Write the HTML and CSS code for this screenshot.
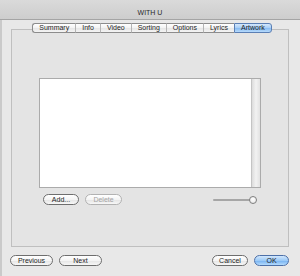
FILE: index.html
```html
<!DOCTYPE html>
<html lang="en">
  <head>
    <meta charset="UTF-8" />
    <title>WITH U</title>
    <link rel="stylesheet" href="styles.css">
  </head>
  <body>
    <div class="titlebar">WITH U</div>

    <div class="content">
      <div class="tabs">
        <div class="tab">Summary</div>
        <div class="tab">Info</div>
        <div class="tab">Video</div>
        <div class="tab">Sorting</div>
        <div class="tab">Options</div>
        <div class="tab">Lyrics</div>
        <div class="tab selected">Artwork</div>
      </div>

      <div class="group">
        <div class="artwork">
          <div class="art-view"></div>
          <div class="scroll"></div>
        </div>
        <div class="art-actions">
          <div class="btn">Add...</div>
          <div class="btn disabled">Delete</div>
          <div class="slider">
            <div class="track"></div>
            <div class="knob"></div>
          </div>
        </div>
      </div>
    </div>

    <div class="footer">
      <div class="btn btn-wide">Previous</div>
      <div class="btn btn-wide">Next</div>
      <div class="spacer"></div>
      <div class="btn">Cancel</div>
      <div class="btn default">OK</div>
    </div>
  </body>
</html>
```

FILE: styles.css
```css
body {
  margin: 0;
  width: 300px;
  height: 276px;
  overflow: hidden;
  font-family: "Liberation Sans", Arial, sans-serif;
  font-size: 7px;
  color: #1e1e1e;
  background: linear-gradient(to right, #cacaca 0, #cacaca 2px, #e8e8e8 2px);
}

.titlebar {
  height: 20px;
  box-sizing: border-box;
  display: flex;
  justify-content: center;
  align-items: flex-end;
  padding-bottom: 2px;
  line-height: 8px;
  color: #2a2a2a;
  background: linear-gradient(#dadada, #cdcdcd);
  border-bottom: 1px solid #a4a4a4;
}

.content {
  padding: 3px 11px 0 11px;
}

.tabs {
  display: flex;
  justify-content: center;
  padding-left: 4px;
  position: relative;
  z-index: 1;
}

.tab {
  height: 10px;
  box-sizing: border-box;
  line-height: 8px;
  padding: 0 6px;
  background: linear-gradient(#ffffff, #f2f2f2 50%, #e6e6e6 51%, #f4f4f4);
  border-top: 1px solid #8c8c8c;
  border-bottom: 1px solid #8c8c8c;
  border-left: 1px solid #b4b4b4;
}

.tab:first-child {
  border-left: 1px solid #8c8c8c;
  border-radius: 3px 0 0 3px;
}

.tab.selected {
  background: linear-gradient(#d4e8fc, #a6cdf6 50%, #86baf1 51%, #b6dafc);
  border: 1px solid #5b7fb4;
  border-radius: 0 3px 3px 0;
}

.group {
  margin-top: -4px;
  height: 218px;
  box-sizing: border-box;
  border: 1px solid #bfbfbf;
  background: #e4e4e4;
  padding: 48px 27px 0 27px;
}

.artwork {
  display: flex;
  height: 110px;
  box-sizing: border-box;
  border: 1px solid #ababab;
  background: #ffffff;
}

.art-view {
  flex: 1;
}

.scroll {
  width: 8px;
  border-left: 1px solid #c4c4c4;
  background: linear-gradient(to right, #dcdcdc, #f2f2f2 50%, #e2e2e2);
}

.art-actions {
  display: flex;
  align-items: center;
  gap: 6px;
  margin-top: 6px;
  padding: 0 4px;
}

.btn {
  width: 36px;
  height: 11px;
  box-sizing: border-box;
  line-height: 9px;
  text-align: center;
  border: 1px solid #6e6e6e;
  border-radius: 6px;
  background: linear-gradient(#ffffff, #f4f4f4 50%, #e4e4e4 51%, #f7f7f7);
}

.btn.disabled {
  width: 37px;
  color: #a4a4a4;
  border-color: #b2b2b2;
}

.btn-wide {
  width: 43px;
}

.btn.default {
  width: 35px;
  border-color: #4d70a8;
  background: linear-gradient(#d2e7fc, #9ccaf7 50%, #74b0f0 51%, #b4dbfd);
}

.slider {
  margin-left: auto;
  width: 44px;
  height: 9px;
  display: flex;
  align-items: center;
}

.track {
  flex: 1;
  height: 2px;
  border-radius: 1px;
  background: #a6a6a6;
}

.knob {
  width: 8px;
  height: 8px;
  box-sizing: border-box;
  margin-left: -1px;
  border-radius: 50%;
  border: 1px solid #7e7e7e;
  background: radial-gradient(circle at 50% 35%, #ffffff, #e2e2e2);
}

.footer {
  display: flex;
  gap: 6px;
  margin-top: 8px;
  padding: 0 11px 0 10px;
}

.spacer {
  flex: 1;
}
```
